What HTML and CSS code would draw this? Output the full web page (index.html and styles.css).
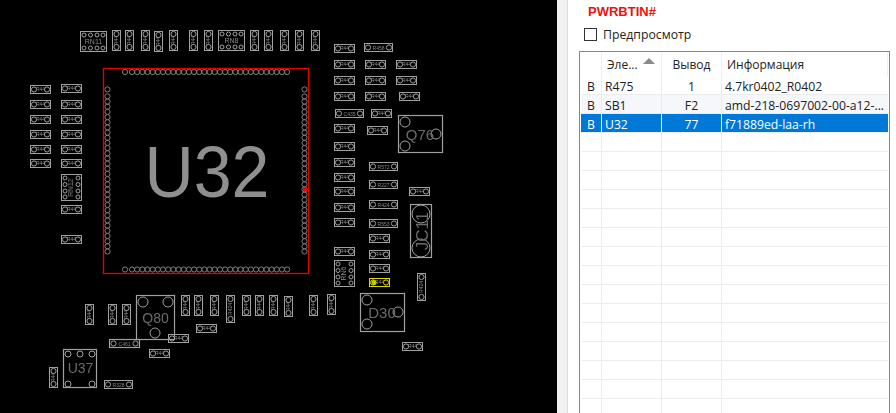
FILE: index.html
```html
<!DOCTYPE html>
<html lang="ru">
<head>
<meta charset="utf-8">
<title>PWRBTIN#</title>
<link rel="stylesheet" href="styles.css">
</head>
<body>
<main class="app">
<section class="board">
<svg class="pcb" width="557" height="413" viewBox="0 0 557 413">
<defs>
<g id="h"><rect x=".5" y=".5" width="20" height="8"/><circle cx="4" cy="4.5" r="2.6"/><circle cx="17" cy="4.5" r="2.6"/><text class="lab" x="10.5" y="6.200">R44</text></g>
<g id="hl"><rect x=".5" y=".5" width="28" height="8"/><circle cx="4" cy="4.5" r="2.6"/><circle cx="25" cy="4.5" r="2.6"/></g>
<g id="v"><rect x=".5" y=".5" width="8" height="20"/><circle cx="4.5" cy="4" r="2.6"/><circle cx="4.5" cy="17" r="2.6"/><text class="lab" transform="translate(6.200 10.500) rotate(-90)">R44</text></g>
<g id="vl"><rect x=".5" y=".5" width="8" height="27"/><circle cx="4.5" cy="4" r="2.6"/><circle cx="4.5" cy="24" r="2.6"/><text class="lab" transform="translate(6.200 14) rotate(-90)">R424</text></g>
<g id="rnh"><rect x=".5" y=".5" width="26" height="20"/><circle cx="4" cy="4" r="2"/><circle cx="10.5" cy="4" r="2"/><circle cx="17" cy="4" r="2"/><circle cx="23" cy="4" r="2"/><circle cx="4" cy="17" r="2"/><circle cx="10.5" cy="17" r="2"/><circle cx="17" cy="17" r="2"/><circle cx="23" cy="17" r="2"/></g>
<g id="rnv"><rect x=".5" y=".5" width="20" height="26"/><circle cx="4" cy="4" r="2"/><circle cx="4" cy="10.5" r="2"/><circle cx="4" cy="17" r="2"/><circle cx="4" cy="23" r="2"/><circle cx="17" cy="4" r="2"/><circle cx="17" cy="10.5" r="2"/><circle cx="17" cy="17" r="2"/><circle cx="17" cy="23" r="2"/></g>
<g id="p5"><circle cx="0" r="2.6"/><circle cx="5.17" r="2.6"/><circle cx="10.34" r="2.6"/><circle cx="15.51" r="2.6"/><circle cx="20.68" r="2.6"/></g>
<g id="row"><circle cx="-7" r="2.6"/><use href="#p5"/><use href="#p5" x="25.85"/><use href="#p5" x="51.7"/><use href="#p5" x="77.55"/><use href="#p5" x="103.4"/><use href="#p5" x="129.25"/><circle cx="155.1" r="2.6"/></g>
</defs>

<g class="pads">
<use href="#row" x="132" y="72"/>
<use href="#row" x="132" y="269.5"/>
<g transform="translate(107.5 96.4) rotate(90)"><use href="#row"/></g>
<g transform="translate(304.5 96.4) rotate(90)"><use href="#row"/></g>
</g>
<rect class="outline" x="103.5" y="68.5" width="205" height="205"/>
<rect class="netpin" x="303" y="187" width="4" height="4"/>
<text class="ref" x="207" y="197" textLength="125" lengthAdjust="spacingAndGlyphs">U32</text>

<g class="c">
<use href="#rnh" x="80" y="31"/>
<use href="#v" x="112" y="30"/><use href="#v" x="125" y="30"/><use href="#v" x="141" y="30"/><use href="#v" x="154" y="31"/><use href="#v" x="169" y="30"/><use href="#v" x="189" y="30"/><use href="#v" x="204" y="30"/>
<use href="#rnh" x="218" y="30"/>
<use href="#v" x="250" y="30"/><use href="#v" x="264" y="30"/><use href="#v" x="280" y="30"/><use href="#v" x="295" y="30"/><use href="#v" x="311" y="30"/>

<use href="#h" x="30" y="85"/><use href="#h" x="30" y="100"/><use href="#h" x="30" y="115"/><use href="#h" x="30" y="130"/><use href="#h" x="30" y="145"/><use href="#h" x="30" y="159"/>
<use href="#h" x="61" y="84"/><use href="#h" x="61" y="100"/><use href="#h" x="61" y="115"/><use href="#h" x="61" y="130"/><use href="#h" x="61" y="145"/><use href="#h" x="61" y="159"/>
<use href="#rnv" x="61" y="174"/>
<use href="#h" x="61" y="205"/><use href="#h" x="61" y="235"/>

<use href="#h" x="334" y="44"/><use href="#hl" x="364" y="43"/>
<use href="#h" x="334" y="60"/><use href="#h" x="365" y="60"/><use href="#h" x="396" y="60"/>
<use href="#h" x="334" y="76"/><use href="#h" x="365" y="76"/><use href="#h" x="396" y="76"/>
<use href="#h" x="334" y="92"/><use href="#h" x="365" y="92"/><use href="#h" x="399" y="92"/>
<use href="#hl" x="335" y="109"/><use href="#h" x="371" y="109"/>
<use href="#h" x="334" y="124"/><use href="#h" x="367" y="126"/>
<use href="#h" x="334" y="142"/><use href="#h" x="334" y="158"/><use href="#h" x="334" y="173"/><use href="#h" x="334" y="187"/><use href="#h" x="334" y="203"/><use href="#h" x="334" y="218"/><use href="#h" x="334" y="247"/>
<use href="#hl" x="369" y="162"/><use href="#hl" x="369" y="180"/><use href="#hl" x="369" y="200"/><use href="#hl" x="369" y="219"/>
<use href="#h" x="409" y="187"/>
<use href="#h" x="369" y="234"/><use href="#h" x="369" y="250"/><use href="#h" x="369" y="264"/>
<use href="#rnv" x="334" y="260"/>
<use href="#vl" x="417" y="273"/>
<use href="#v" x="284" y="296"/><use href="#v" x="309" y="295"/><use href="#v" x="327" y="294"/>
<use href="#h" x="402" y="342"/>

<use href="#v" x="85" y="304"/><use href="#v" x="108" y="304"/><use href="#v" x="122" y="304"/>
<use href="#v" x="181" y="295"/><use href="#v" x="194" y="295"/><use href="#v" x="210" y="295"/><use href="#vl" x="226" y="295"/><use href="#v" x="242" y="295"/><use href="#v" x="255" y="295"/><use href="#v" x="269" y="295"/>
<use href="#h" x="196" y="324"/><use href="#h" x="168" y="334"/><use href="#h" x="149" y="349"/>
<use href="#hl" x="104" y="380"/><use href="#v" x="49" y="367"/>
<rect x="109.500" y="339.500" width="30" height="8"/><circle cx="113.500" cy="343.500" r="2.600"/><circle cx="135.500" cy="343.500" r="2.600"/>

<rect x="398.500" y="115.500" width="44" height="37"/><circle cx="405" cy="122" r="5"/><circle cx="405" cy="146" r="5"/><circle cx="436" cy="134" r="5"/>
<rect x="410.500" y="204.500" width="21" height="53"/><circle cx="421" cy="214" r="9"/><circle cx="421" cy="248" r="9"/>
<rect x="360.500" y="293.500" width="44" height="38"/><circle cx="367" cy="300" r="5"/><circle cx="367" cy="324" r="5"/><circle cx="398" cy="312" r="5"/>
<rect x="136.500" y="295.500" width="38" height="44"/><circle cx="143" cy="302" r="5"/><circle cx="168" cy="302" r="5"/><circle cx="155" cy="333" r="5"/>
<rect x="63.500" y="349.500" width="33" height="38"/><circle cx="68" cy="354" r="3"/><circle cx="80" cy="354" r="3"/><circle cx="92" cy="354" r="3"/><circle cx="68" cy="384" r="3"/><circle cx="92" cy="384" r="3"/>
</g>

<g class="c sel">
<use href="#h" x="369" y="278"/>
</g>
<circle class="selpin" cx="374" cy="282.500" r="2.600"/>

<g class="labels">
<text class="tiny wide" x="93.500" y="43.500">RN11</text>
<text class="tiny wide" x="231.500" y="42.500">RN8</text>
<text class="tiny wide" transform="translate(73 187.500) rotate(-90)">RN12</text>
<text class="tiny wide" transform="translate(346 273.500) rotate(-90)">RN6</text>
<text class="tiny small" x="124.500" y="345.500">C461</text>
<text class="tiny small" x="349.500" y="115.500">C435</text>
<text class="tiny small" x="378.500" y="49.500">R458</text>
<text class="tiny small" x="383.500" y="168.500">R572</text>
<text class="tiny small" x="383.500" y="186.500">R227</text>
<text class="tiny small" x="383.500" y="206.500">R424</text>
<text class="tiny small" x="383.500" y="225.500">R553</text>
<text class="tiny small" x="118.500" y="386.500">R328</text>

<text class="comp" x="420" y="139.500">Q76</text>
<text class="comp" x="382" y="317.500">D30</text>
<text class="comp q" x="155.500" y="323">Q80</text>
<text class="comp q" x="80.500" y="373">U37</text>
<text class="comp jc" transform="translate(427.500 231) rotate(-90)">JC11</text>
</g>
</svg>
</section>
<div class="divider"></div>
<section class="panel">
<h1 class="net">PWRBTIN#</h1>
<label class="preview"><input class="check" type="checkbox">Предпросмотр</label>
<div class="frame">
<table class="grid">
<thead>
<tr><th class="side"></th><th class="left">Эле...<span class="sort"></span></th><th>Вывод</th><th class="left info">Информация</th></tr>
</thead>
<tbody>
<tr><td class="side">B</td><td class="left">R475</td><td>1</td><td class="left">4.7kr0402_R0402</td></tr>
<tr class="alt"><td class="side">B</td><td class="left">SB1</td><td>F2</td><td class="left">amd-218-0697002-00-a12-...</td></tr>
<tr class="selected"><td class="side">B</td><td class="left">U32</td><td>77</td><td class="left">f71889ed-laa-rh</td></tr>
<tr><td></td><td></td><td></td><td></td></tr>
<tr><td></td><td></td><td></td><td></td></tr>
<tr><td></td><td></td><td></td><td></td></tr>
<tr><td></td><td></td><td></td><td></td></tr>
<tr><td></td><td></td><td></td><td></td></tr>
<tr><td></td><td></td><td></td><td></td></tr>
<tr><td></td><td></td><td></td><td></td></tr>
<tr><td></td><td></td><td></td><td></td></tr>
<tr><td></td><td></td><td></td><td></td></tr>
<tr><td></td><td></td><td></td><td></td></tr>
<tr><td></td><td></td><td></td><td></td></tr>
<tr><td></td><td></td><td></td><td></td></tr>
<tr><td></td><td></td><td></td><td></td></tr>
<tr><td></td><td></td><td></td><td></td></tr>
<tr><td></td><td></td><td></td><td></td></tr>
</tbody>
</table>
</div>
</section>
</main>
</body>
</html>
```
FILE: styles.css
```css
* { box-sizing: border-box; }
html, body { margin: 0; height: 413px; overflow: hidden; background: #fff; }
.app { display: flex; width: 896px; height: 413px; overflow: hidden; font-family: "Open Sans", "Noto Sans", sans-serif; color: #222; }
.board { width: 557px; flex: none; background: #000; }
.pcb { display: block; }
.pads { fill: none; stroke: #808080; stroke-width: 1; filter: blur(.25px); }
.outline { fill: none; stroke: #e00000; stroke-width: 1.4; }
.netpin { fill: #f00000; }
.ref { font: 72px "Liberation Sans", sans-serif; fill: #8f8f8f; text-anchor: middle; }
.c { fill: none; stroke: #a0a0a0; stroke-width: 1.2; filter: blur(.4px); }
.c circle, .c use { stroke-width: 1; }
.lab { font: 5px "Liberation Sans", sans-serif; fill: #8c8c8c; stroke: none; text-anchor: middle; }
.sel { stroke: #d8d800; }
.selpin { fill: #c8c800; }
.labels { filter: blur(.2px); }
.tiny { font-family: "Liberation Sans", sans-serif; fill: #888; text-anchor: middle; }
.wide { font-size: 7px; }
.small { font-size: 5px; }
.comp { font: 15px "Liberation Sans", sans-serif; fill: #6a6a6a; text-anchor: middle; }
.q { font-size: 14px; }
.jc { font-size: 17px; }
.divider { width: 11px; flex: none; background: #f0f0f0; border-right: 1px solid #dcdcdc; }
.panel { flex: 1; min-width: 0; background: #fff; }
.net { margin: 5px 0 0 20px; height: 14px; font: bold 13px/14px "Liberation Sans", sans-serif; color: #f01010; }
.preview { display: flex; align-items: center; gap: 6px; margin: 8px 0 0 16px; height: 14px; font-size: 12.25px; color: #222; }
.check { appearance: none; margin: 0; width: 13px; height: 13px; border: 1px solid #333; background: #fff; }
.frame { margin: 10px 0 0 11px; width: 311px; height: 400px; border: 1px solid #828790; padding: 0 1px 0 1px; overflow: hidden; }
.grid { table-layout: fixed; width: 307px; border-collapse: separate; border-spacing: 0; font-size: 12px; }
.grid th, .grid td { padding: 0; font-weight: 400; text-align: center; overflow: hidden; white-space: nowrap; }
.grid th:nth-child(1), .grid td:nth-child(1) { width: 21px; }
.grid th:nth-child(2), .grid td:nth-child(2) { width: 60px; }
.grid th:nth-child(3), .grid td:nth-child(3) { width: 60px; }
.grid th { height: 24px; border-right: 1px solid #f0f0f0; position: relative; }
.grid td { height: 19px; padding-top: 3px; line-height: 15px; font-size: 12.2px; border-right: 1px solid #ececec; border-bottom: 1px solid #ececec; }
.grid td:last-child { border-right: 0; }
.grid th.left { text-align: left; padding-left: 5px; }
.grid td.left { text-align: left; padding-left: 3px; }
.grid th.info { padding-left: 5px; }
.grid td.side { text-align: center; }
.alt td { background: #f5f7fa; }
.selected td { background: #0078d7; color: #fff; border-right-color: #fff; }
.sort { position: absolute; left: 41px; top: 6px; width: 0; height: 0; border-left: 6px solid transparent; border-right: 6px solid transparent; border-bottom: 6px solid #8a8a8a; }
```
